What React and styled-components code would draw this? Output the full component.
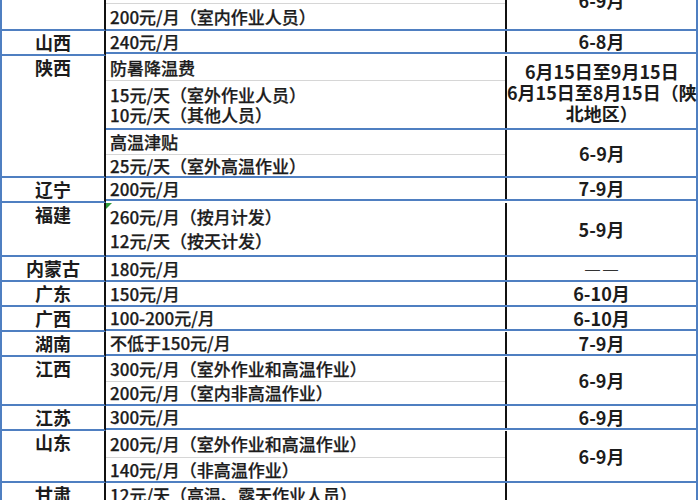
import React from 'react';
import styled, { createGlobalStyle } from 'styled-components';

const BLUE = '#4f7fc1';
const INK = '#1c1c1c';

const GlobalStyle = createGlobalStyle`
  html, body {
    margin: 0;
    padding: 0;
    background: #fff;
    overflow: hidden;
  }
  body {
    width: 700px;
    height: 500px;
    font-family: "Noto Sans CJK SC", "Noto Sans", sans-serif;
    color: ${INK};
  }
`;

const Table = styled.div`
  width: 698px;
  margin-top: -29px;
  box-sizing: border-box;
  border-left: 2px solid ${BLUE};
  border-right: 2px solid ${BLUE};
`;

const Province = styled.div`
  display: flex;
  align-items: stretch;
`;

const Name = styled.div`
  width: 104px;
  flex-shrink: 0;
  box-sizing: border-box;
  border-right: 2px solid #111;
  border-bottom: 2px solid ${BLUE};
  text-align: center;
  font-size: 18px;
  font-weight: 700;
  line-height: 23px;
`;

const Parts = styled.div`
  flex: 1;
  display: flex;
  flex-direction: column;
`;

const Part = styled.div`
  display: flex;
  height: ${p => p.$h}px;
  box-sizing: border-box;
  border-bottom: 2px solid ${BLUE};
`;

const Value = styled.div`
  position: relative;
  width: 401px;
  flex-shrink: 0;
  box-sizing: border-box;
  border-right: 2px solid #111;
  display: flex;
  flex-direction: column;
`;

const Block = styled.div`
  display: flex;
  flex-direction: column;
  justify-content: center;
  padding-left: 4px;
  font-size: 17px;
  font-weight: 500;
  -webkit-text-stroke: 0.25px ${INK};
  line-height: ${p => p.$lh || 22}px;
  white-space: nowrap;
  overflow: hidden;
  ${p => (p.$h ? `height: ${p.$h}px; flex-shrink: 0;` : 'flex: 1;')}
  & + & {
    border-top: 1px solid #d6d6d6;
  }
`;

const Flag = styled.span`
  position: absolute;
  left: 0;
  top: 0;
  width: 0;
  height: 0;
  border-top: 6px solid #2e9a3a;
  border-right: 6px solid transparent;
`;

const Period = styled.div`
  flex: 1;
  display: flex;
  flex-direction: column;
  justify-content: center;
  align-items: center;
  font-size: 18px;
  font-weight: 700;
  line-height: 21px;
  white-space: nowrap;
`;

const Dash = styled.div`
  display: flex;
  gap: 3px;
  font-family: "Liberation Sans", sans-serif;
  font-size: 15px;
  font-weight: 400;
  color: #333;
`;

const rows = [
  {
    name: '',
    parts: [{ h: 60, blocks: [{ h: 32, lines: [''] }, { lines: ['200元/月（室内作业人员）'] }], period: ['6-9月'] }],
  },
  { name: '山西', parts: [{ h: 23, blocks: [{ lines: ['240元/月'] }], period: ['6-8月'] }] },
  {
    name: '陕西',
    parts: [
      {
        h: 74,
        blocks: [
          { h: 24, lines: ['防暑降温费'] },
          { lh: 20, lines: ['15元/天（室外作业人员）', '10元/天（其他人员）'] },
        ],
        period: ['6月15日至9月15日', '6月15日至8月15日（陕', '北地区）'],
      },
      {
        h: 48,
        blocks: [{ h: 24, lines: ['高温津贴'] }, { lines: ['25元/天（室外高温作业）'] }],
        period: ['6-9月'],
      },
    ],
  },
  { name: '辽宁', parts: [{ h: 23, blocks: [{ lines: ['200元/月'] }], period: ['7-9月'] }] },
  {
    name: '福建',
    parts: [
      {
        h: 54,
        flag: true,
        blocks: [{ lh: 24, lines: ['260元/月（按月计发）', '12元/天（按天计发）'] }],
        period: ['5-9月'],
      },
    ],
  },
  { name: '内蒙古', parts: [{ h: 25, blocks: [{ lines: ['180元/月'] }], dash: true, period: ['——'] }] },
  { name: '广东', parts: [{ h: 25, blocks: [{ lines: ['150元/月'] }], period: ['6-10月'] }] },
  { name: '广西', parts: [{ h: 24, blocks: [{ lines: ['100-200元/月'] }], period: ['6-10月'] }] },
  { name: '湖南', parts: [{ h: 24, blocks: [{ lines: ['不低于150元/月'] }], period: ['7-9月'] }] },
  {
    name: '江西',
    parts: [
      {
        h: 49,
        blocks: [{ h: 24, lines: ['300元/月（室外作业和高温作业）'] }, { lines: ['200元/月（室内非高温作业）'] }],
        period: ['6-9月'],
      },
    ],
  },
  { name: '江苏', parts: [{ h: 24, blocks: [{ lines: ['300元/月'] }], period: ['6-9月'] }] },
  {
    name: '山东',
    parts: [
      {
        h: 52,
        blocks: [{ h: 26, lines: ['200元/月（室外作业和高温作业）'] }, { lines: ['140元/月（非高温作业）'] }],
        period: ['6-9月'],
      },
    ],
  },
  {
    name: '甘肃',
    parts: [
      {
        h: 60,
        blocks: [{ h: 24, lines: ['12元/天（高温、露天作业人员）'] }, { lines: [''] }],
        period: ['6-9月'],
      },
    ],
  },
];

const App = () => (
  <>
    <GlobalStyle />
    <Table>
      {rows.map((row, i) => (
        <Province key={i}>
          <Name>{row.name}</Name>
          <Parts>
            {row.parts.map((part, j) => (
              <Part key={j} $h={part.h}>
                <Value>
                  {part.flag && <Flag />}
                  {part.blocks.map((block, k) => (
                    <Block key={k} $h={block.h} $lh={block.lh}>
                      {block.lines.map((line, n) => (
                        <div key={n}>{line || '\u00a0'}</div>
                      ))}
                    </Block>
                  ))}
                </Value>
                <Period>
                  {part.period.map((line, n) =>
                    part.dash ? (
                      <Dash key={n}>
                        {line.split('').map((ch, m) => (
                          <span key={m}>{ch}</span>
                        ))}
                      </Dash>
                    ) : (
                      <div key={n}>{line}</div>
                    )
                  )}
                </Period>
              </Part>
            ))}
          </Parts>
        </Province>
      ))}
    </Table>
  </>
);

export default App;
